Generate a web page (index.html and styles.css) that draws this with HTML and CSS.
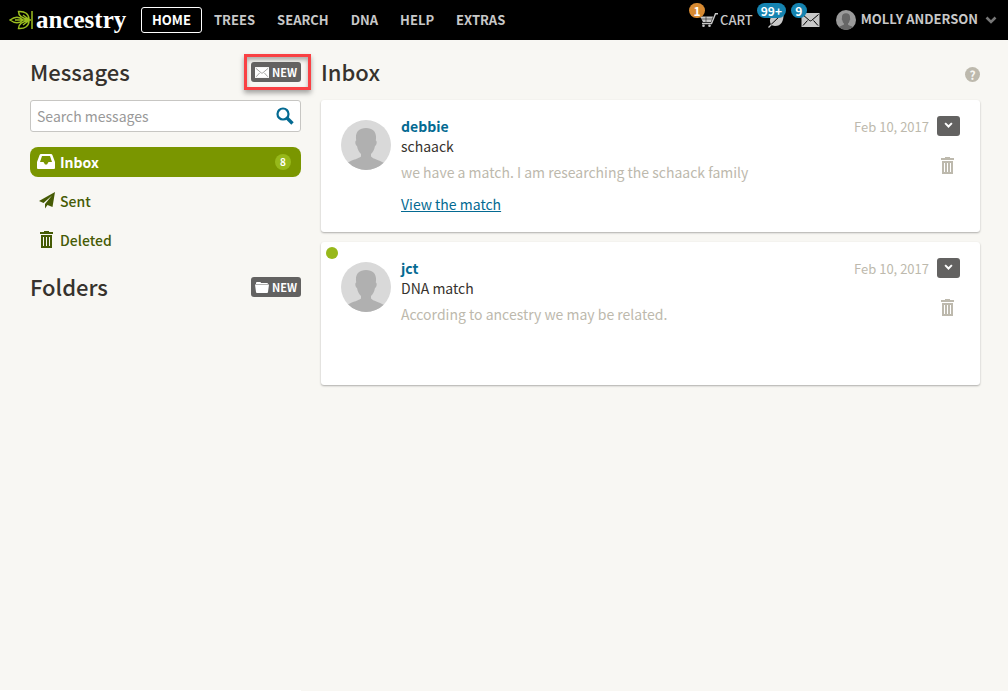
FILE: index.html
```html
<!DOCTYPE html>
<html lang="en">
<head>
<meta charset="utf-8">
<meta name="viewport" content="width=device-width, initial-scale=1">
<title>Messages</title>
<link rel="stylesheet" href="styles.css">
</head>
<body>
<svg class="sprite" aria-hidden="true">
  <symbol id="trash" viewBox="0 0 13 17"><path fill="currentColor" fill-rule="evenodd" d="M0 1h4V0h5v1h4v2H0zM1 4h11v13H1zM3 6v9h1V6zM6 6v9h1V6zM9 6v9h1V6z"/></symbol>
  <symbol id="mail" viewBox="0 0 18 14"><path fill="currentColor" d="M0 0h18v14H0z"/><path fill="none" stroke="var(--fold)" stroke-width="1" d="M1 1.500l7 6q1 .8 2 0l7-6M1.500 12.500l4.500-5M16.500 12.500l-4.500-5"/></symbol>
  <symbol id="person" viewBox="0 0 50 50"><path fill="currentColor" d="M25 8c7 0 10.500 4 10 10.500l-.2 2c1.500.5 1 4.500-.8 5.500-.8 4-2 6-4 8v2.500c2 2.500 8 3.500 13 6.500A25 25 0 0 1 7 42.500c5-3 11-4 13-6V34c-2-2-3.200-4-4-8-1.800-1-2.300-5-.8-5.500l-.2-2C14.500 12 18 8 25 8z"/></symbol>
  <symbol id="chevron" viewBox="0 0 12 8"><path fill="none" stroke="currentColor" stroke-width="2.600" d="M1.500 1.500L6 6l4.500-4.500"/></symbol>
</svg>

<header class="topbar">
  <a class="logo" href="#" aria-label="ancestry">
    <svg class="logo-leaf" viewBox="0 0 24 20" aria-hidden="true"><path fill="none" stroke="#9cbe1f" stroke-width="1.500" d="M23 1v18M14 10C10 6 5 7 1 10c4 3 9 4 13 0zM6 10h16M20 9.500C13 8.500 9.500 6 9.500 1.500 16 1 20 4 20 9.500zM20 10.500C13 11.500 9.500 14 9.500 18.500 16 19 20 16 20 10.500zM20 9.500l-6-4.500M20 10.500L14 15"/></svg>
    <span class="logo-name">ancestry</span>
  </a>
  <nav class="nav">
    <a class="nav-link nav-link-current" href="#">HOME</a>
    <a class="nav-link" href="#">TREES</a>
    <a class="nav-link" href="#">SEARCH</a>
    <a class="nav-link" href="#">DNA</a>
    <a class="nav-link" href="#">HELP</a>
    <a class="nav-link" href="#">EXTRAS</a>
  </nav>
  <div class="tools">
    <a class="tool" href="#">
      <svg class="icon-cart" viewBox="0 0 18 14" aria-hidden="true"><path fill="currentColor" d="M0 3.500h13L11 9H3z"/><path fill="none" stroke="currentColor" stroke-width="1.400" d="M18 .7h-2.500L11.500 10.500H2"/><path stroke="#000" stroke-width=".5" d="M1 6h11M6 3.500V9"/><circle cx="3.500" cy="12.700" r="1.300" fill="currentColor"/><circle cx="9.500" cy="12.700" r="1.300" fill="currentColor"/></svg>
      <span>CART</span>
      <span class="badge badge-cart">1</span>
    </a>
    <a class="tool tool-leaf" href="#" aria-label="Hints">
      <svg class="icon-leaf" viewBox="0 0 16 16" aria-hidden="true"><path fill="currentColor" d="M15.500 0C16 8 14 14 7 14c-2 0-3.500-.8-4-1.500C-.5 6 5 1 15.500 0z"/><path fill="none" stroke="#000" stroke-width="1" d="M2 13.500L12 4"/><path stroke="currentColor" stroke-width="1.300" d="M.5 15.500l3-3"/></svg>
      <span class="badge badge-hints">99+</span>
    </a>
    <a class="tool tool-mail" href="#" aria-label="Messages">
      <svg class="icon-mail" aria-hidden="true"><use href="#mail"/></svg>
      <span class="badge badge-mail">9</span>
    </a>
    <button class="account" type="button">
      <svg class="account-face" viewBox="0 0 50 50" aria-hidden="true"><use href="#person"/></svg>
      <span>MOLLY ANDERSON</span>
      <svg class="account-arrow" aria-hidden="true"><use href="#chevron"/></svg>
    </button>
  </div>
</header>

<div class="page">
  <aside class="sidebar">
    <div class="heading-row">
      <h2 class="heading">Messages</h2>
      <div class="callout"><button class="new-button" type="button"><svg class="new-mail" aria-hidden="true"><use href="#mail"/></svg><span>NEW</span></button></div>
    </div>
    <form class="search">
      <input class="search-input" type="text" placeholder="Search messages" aria-label="Search messages">
      <button class="search-button" type="submit" aria-label="Search"><svg class="search-icon" viewBox="0 0 18 18" aria-hidden="true"><circle cx="7" cy="7" r="5.500" fill="none" stroke="currentColor" stroke-width="2.200"/><path stroke="currentColor" stroke-width="3.400" d="M11 11l5.500 5.500"/></svg></button>
    </form>
    <nav class="boxes">
      <a class="box box-current" href="#">
        <svg class="box-icon" viewBox="0 0 18 18" aria-hidden="true"><path fill="currentColor" fill-rule="evenodd" d="M4 1h10q1 0 1.400 1L18 9v6q0 1-1 1H1q-1 0-1-1V9l2.600-7Q3 1 4 1zM5 3L3 9h3.500L8 11.500h2L11.500 9H15l-2-6z"/></svg>
        <span>Inbox</span><span class="count">8</span>
      </a>
      <a class="box" href="#">
        <svg class="box-icon" viewBox="0 0 18 18" aria-hidden="true"><path fill="currentColor" d="M18 0L2 9l4.500 2L15 3.500 8 12v4.500l2.500-3.500 5 2z"/></svg>
        <span>Sent</span>
      </a>
      <a class="box" href="#">
        <svg class="box-icon" viewBox="0 0 18 18" aria-hidden="true"><use href="#trash" x="3" y="0" width="13" height="17"/></svg>
        <span>Deleted</span>
      </a>
    </nav>
    <div class="heading-row">
      <h2 class="heading">Folders</h2>
      <button class="new-button" type="button"><svg class="new-folder" viewBox="0 0 14 11" aria-hidden="true"><path fill="currentColor" d="M1 2V1q0-1 1-1h3q1 0 1 1h6q1 0 1 1zM0 2.600h14l-1 7.400q0 1-1 1H2q-1 0-1-1z"/></svg><span>NEW</span></button>
    </div>
  </aside>

  <main class="main">
    <div class="heading-row">
      <h1 class="heading">Inbox</h1>
      <button class="help" type="button" aria-label="Help">?</button>
    </div>
    <article class="card">
      <svg class="avatar" aria-hidden="true"><use href="#person"/></svg>
      <div class="message">
        <a class="sender" href="#">debbie</a>
        <p class="subject">schaack</p>
        <p class="snippet">we have a match. I am researching the schaack family</p>
        <a class="match-link" href="#">View the match</a>
      </div>
      <div class="side">
        <div class="side-top"><time class="date" datetime="2017-02-10">Feb 10, 2017</time><button class="menu" type="button" aria-label="Options"><svg class="menu-icon" aria-hidden="true"><use href="#chevron"/></svg></button></div>
        <button class="delete" type="button" aria-label="Delete"><svg class="delete-icon" aria-hidden="true"><use href="#trash"/></svg></button>
      </div>
    </article>
    <article class="card card-unread">
      <span class="unread-dot"></span>
      <svg class="avatar" aria-hidden="true"><use href="#person"/></svg>
      <div class="message">
        <a class="sender" href="#">jct</a>
        <p class="subject">DNA match</p>
        <p class="snippet">According to ancestry we may be related.</p>
      </div>
      <div class="side">
        <div class="side-top"><time class="date" datetime="2017-02-10">Feb 10, 2017</time><button class="menu" type="button" aria-label="Options"><svg class="menu-icon" aria-hidden="true"><use href="#chevron"/></svg></button></div>
        <button class="delete" type="button" aria-label="Delete"><svg class="delete-icon" aria-hidden="true"><use href="#trash"/></svg></button>
      </div>
    </article>
  </main>
</div>
<div class="status-edge"></div>
</body>
</html>
```
FILE: styles.css
```css
* { box-sizing: border-box; }
body {
  margin: 0;
  min-height: 100vh;
  display: flex;
  flex-direction: column;
  background: #f8f7f3;
  color: #36322d;
  font: 14px/20px "Noto Sans CJK SC", "Noto Sans", sans-serif;
}
button, input { font: inherit; margin: 0; }
button { padding: 0; border: 0; background: none; color: inherit; cursor: pointer; }
a { color: inherit; text-decoration: none; }
p { margin: 0; }
svg { display: block; flex: none; }
.sprite { position: absolute; width: 0; height: 0; }

.topbar {
  display: flex;
  align-items: center;
  height: 40px;
  padding: 0 11px 0 9px;
  background: #000;
  color: #c8c8c8;
  font-size: 13px;
  font-weight: 500;
}
.logo { display: flex; align-items: center; gap: 3px; width: 132px; }
.logo-leaf { width: 24px; height: 20px; }
.logo-name { color: #fff; font: 700 25px/30px "Liberation Serif", serif; }
.nav { display: flex; }
.nav-link { padding: 1px 10px; border: 1px solid transparent; border-radius: 3px; font-weight: 700; line-height: 22px; }
.nav-link-current { margin-right: 1px; border-color: #fff; color: #fff; }
.tools { display: flex; align-items: center; margin-left: auto; }
.tool { position: relative; display: flex; align-items: center; gap: 2px; --fold: #000; }
.icon-cart { width: 18px; height: 14px; }
.tool-leaf { margin-left: 15px; }
.icon-leaf { width: 16px; height: 16px; }
.tool-mail { margin-left: 17px; }
.icon-mail { width: 19px; height: 14px; }
.badge {
  position: absolute;
  height: 15px;
  min-width: 16px;
  padding: 0 4px;
  border-radius: 8px;
  background: #1583b0;
  color: #fff;
  font-size: 12px;
  font-weight: 700;
  line-height: 15px;
  text-align: center;
}
.badge-cart { left: -11px; top: -7px; background: #d78a32; }
.badge-hints { left: -11px; top: -9px; }
.badge-mail { left: -10px; top: -10px; }
.account { display: flex; align-items: center; gap: 5px; margin-left: 16px; font-weight: 700; line-height: 18px; }
.account span { padding-bottom: 2px; }
.account-face { width: 20px; height: 20px; border-radius: 50%; background: #999; color: #666; }
.account-arrow { width: 12px; height: 8px; margin-left: 2px; color: #777; }

.page { display: flex; flex: 1; gap: 20px; padding: 12px 28px 0 30px; }
.sidebar { flex: none; width: 271px; }
.main { flex: 1; min-width: 0; }
.heading-row { display: flex; align-items: center; justify-content: space-between; height: 40px; }
.heading { margin: 0; padding-bottom: 2px; font-size: 22px; line-height: 30px; font-weight: 500; }
.callout {
  margin-right: -10px;
  padding: 5px 7px 5px 4px;
  border: 3px solid #f94144;
  box-shadow: 0 3px 5px rgba(0, 0, 0, .35), inset 0 3px 4px rgba(0, 0, 0, .3);
}
.new-button {
  display: flex;
  align-items: center;
  justify-content: center;
  gap: 3px;
  width: 50px;
  height: 20px;
  border-radius: 3px;
  background: #636261;
  color: #fff;
  font-size: 11px;
  font-weight: 700;
  --fold: #8c8b8a;
}
.new-mail, .new-folder { width: 14px; height: 11px; }
.search {
  display: flex;
  align-items: center;
  height: 32px;
  margin: 8px 0 15px;
  padding: 0 6px;
  border: 1px solid #c7c6c3;
  border-radius: 3px;
  background: #fff;
}
.search-input { flex: 1; min-width: 0; padding: 0; border: 0; outline: 0; background: none; }
.search-input::placeholder { color: #999; opacity: 1; }
.search-button { color: #046a92; }
.search-icon { width: 18px; height: 18px; }
.boxes { display: flex; flex-direction: column; gap: 9px; margin-bottom: 12px; }
.box { display: flex; align-items: center; gap: 5px; height: 30px; padding: 0 10px 0 7px; border-radius: 8px; color: #465b05; font-weight: 500; }
.box-icon { width: 18px; height: 18px; }
.box-current { background: #7a9600; color: #fff; font-weight: 700; }
.count { width: 16px; height: 16px; margin-left: auto; border-radius: 50%; background: #97b81a; font-size: 10px; line-height: 16px; text-align: center; }

.help { width: 15px; height: 15px; margin-top: 4px; border-radius: 50%; background: #bdb9ad; color: #f8f7f3; font-size: 12px; font-weight: 700; line-height: 15px; }
.card {
  position: relative;
  display: flex;
  gap: 10px;
  min-height: 132px;
  margin: 0 0 10px;
  padding: 16px 20px;
  border-radius: 3px;
  background: #fff;
  box-shadow: 0 1px 2px rgba(0, 0, 0, .3);
}
.heading-row + .card { margin-top: 8px; }
.card-unread { min-height: 143px; }
.unread-dot { position: absolute; left: 5px; top: 5px; width: 12px; height: 12px; border-radius: 50%; background: #97b81a; }
.avatar { width: 50px; height: 50px; margin-top: 4px; border-radius: 50%; background: #d9d9d9; color: #b0b0b0; }
.message { flex: 1; min-width: 0; }
.sender { display: block; color: #046a92; font-weight: 700; }
.snippet { margin-top: 6px; color: #bdb9ad; }
.match-link { display: block; width: fit-content; margin-top: 12px; color: #046a92; text-decoration: underline; }
.side { display: flex; flex-direction: column; align-items: flex-end; gap: 19px; }
.side-top { display: flex; gap: 8px; }
.date { color: #bdb9ad; font-size: 13px; line-height: 22px; }
.menu { display: grid; justify-items: center; align-content: start; width: 23px; height: 20px; padding-top: 6px; border-radius: 3px; background: #636261; color: #fff; }
.menu-icon { width: 9px; height: 6px; }
.delete { margin-right: 6px; color: #bdb9ad; }
.delete-icon { width: 13px; height: 17px; }
.status-edge { width: 301px; height: 1px; background: #fff; }
```
